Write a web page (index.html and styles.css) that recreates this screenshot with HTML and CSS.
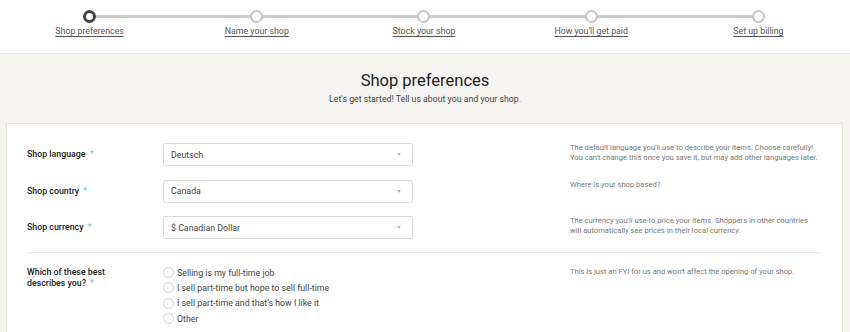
FILE: index.html
```html
<!DOCTYPE html>
<html lang="en">
<head>
<meta charset="utf-8">
<title>Shop preferences</title>
<link rel="stylesheet" href="styles.css">
</head>
<body>
<header class="stepper">
  <div class="step is-current"><span class="dot"></span><a class="step-label" href="#">Shop preferences</a></div>
  <div class="step"><span class="dot"></span><a class="step-label" href="#">Name your shop</a></div>
  <div class="step"><span class="dot"></span><a class="step-label" href="#">Stock your shop</a></div>
  <div class="step"><span class="dot"></span><a class="step-label" href="#">How you'll get paid</a></div>
  <div class="step"><span class="dot"></span><a class="step-label" href="#">Set up billing</a></div>
</header>
<main class="page">
  <h1 class="title">Shop preferences</h1>
  <p class="subtitle">Let's get started! Tell us about you and your shop.</p>
  <section class="card">
    <div class="form-grid">
      <div class="label">Shop language <span class="req">*</span></div>
      <div class="select"><span>Deutsch</span><span class="caret"></span></div>
      <div class="help">The default language you'll use to describe your items. Choose carefully!<br>You can't change this once you save it, but may add other languages later.</div>

      <div class="label">Shop country <span class="req">*</span></div>
      <div class="select"><span>Canada</span><span class="caret"></span></div>
      <div class="help">Where is your shop based?</div>

      <div class="label">Shop currency <span class="req">*</span></div>
      <div class="select"><span>$ Canadian Dollar</span><span class="caret"></span></div>
      <div class="help">The currency you'll use to price your items. Shoppers in other countries<br>will automatically see prices in their local currency.</div>
    </div>
    <hr class="divider">
    <div class="form-grid radio-grid">
      <div class="label label-top">Which of these best<br>describes you? <span class="req">*</span></div>
      <div class="radios">
        <div class="radio"><span class="circle"></span>Selling is my full-time job</div>
        <div class="radio"><span class="circle"></span>I sell part-time but hope to sell full-time</div>
        <div class="radio"><span class="circle"></span>I sell part-time and that’s how I like it</div>
        <div class="radio"><span class="circle"></span>Other</div>
      </div>
      <div class="help help-top">This is just an FYI for us and won’t affect the opening of your shop.</div>
    </div>
  </section>
</main>
</body>
</html>
```
FILE: styles.css
```css
* { box-sizing: border-box; }
html, body { margin: 0; padding: 0; }
body {
  font-family: "Roboto", "Liberation Sans", Arial, sans-serif;
  background: #f5f4f0;
  color: #333;
  height: 332px;
  overflow: hidden;
}

.stepper {
  display: grid;
  grid-template-columns: repeat(5, 1fr);
  padding: 0 8px 0 6px;
  height: 54px;
  background: #fff;
  border-bottom: 1px solid #ebeae6;
}
.step {
  position: relative;
  display: flex;
  flex-direction: column;
  align-items: center;
  padding-top: 10px;
}
.step:not(:last-child)::after {
  content: "";
  position: absolute;
  top: 15px;
  left: 50%;
  width: 100%;
  height: 3px;
  background: #cbcbcb;
}
.dot {
  position: relative;
  z-index: 1;
  width: 13px;
  height: 13px;
  border-radius: 50%;
  border: 2.5px solid #c6c6c6;
  background: #fff;
}
.is-current .dot { border-color: #444; border-width: 3px; }
.step-label {
  margin-top: 3px;
  font-size: 8.8px;
  line-height: 11px;
  color: #555;
  text-decoration: underline;
  text-underline-offset: 1.5px;
}

.page { padding-top: 17px; }
.title {
  margin: 0;
  text-align: center;
  font-size: 16.5px;
  line-height: 20px;
  font-weight: 400;
  color: #222;
}
.subtitle {
  margin: 2px 0 18px;
  text-align: center;
  font-size: 8.75px;
  line-height: 12px;
  color: #444;
}

.card {
  margin: 0 7px 0 6px;
  background: #fff;
  border: 1px solid #e6e4df;
  padding: 19px 21px 30px 20px;
}
.form-grid {
  display: grid;
  grid-template-columns: 136px 250px 1fr 251px;
  row-gap: 13.5px;
}
.label {
  grid-column: 1;
  align-self: center;
  font-size: 8.8px;
  line-height: 11px;
  font-weight: 500;
  color: #222;
}
.req { color: #86bfcb; margin-left: 2px; }
.select {
  grid-column: 2;
  height: 23px;
  display: flex;
  align-items: center;
  justify-content: space-between;
  padding: 0 11px 0 7px;
  border: 1px solid #dcdcdc;
  border-radius: 2px;
  font-size: 8.8px;
  color: #444;
}
.caret {
  width: 0;
  height: 0;
  border-left: 2.5px solid transparent;
  border-right: 2.5px solid transparent;
  border-top: 3px solid #b5b5b5;
}
.help {
  grid-column: 4;
  font-size: 7.6px;
  line-height: 10px;
  color: #777;
  white-space: nowrap;
}
.divider {
  margin: 13px 0 0;
  border: 0;
  border-top: 1px solid #e6e6e6;
  height: 0;
}
.radio-grid { margin-top: 12px; }
.label-top {
  align-self: start;
  padding-top: 2px;
}
.radios { grid-column: 2 / span 2; }
.radio {
  display: flex;
  align-items: center;
  height: 15.3px;
  font-size: 8.8px;
  color: #444;
}
.circle {
  width: 11px;
  height: 11px;
  margin-right: 3px;
  border-radius: 50%;
  border: 1px solid #cfcfcf;
  background: #fff;
}
.help-top { padding-top: 2px; }
```
